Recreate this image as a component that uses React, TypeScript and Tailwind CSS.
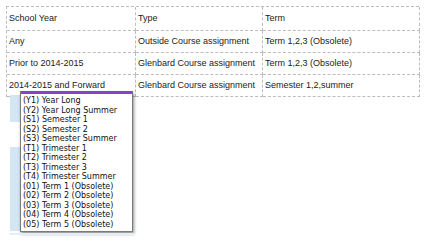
const rows = [
  ["School Year", "Type", "Term"],
  ["Any", "Outside Course assignment", "Term 1,2,3 (Obsolete)"],
  ["Prior to 2014-2015", "Glenbard Course assignment", "Term 1,2,3 (Obsolete)"],
  ["2014-2015 and Forward", "Glenbard Course assignment", "Semester 1,2,summer"],
];

const options = [
  "(Y1) Year Long",
  "(Y2) Year Long Summer",
  "(S1) Semester 1",
  "(S2) Semester 2",
  "(S3) Semester Summer",
  "(T1) Trimester 1",
  "(T2) Trimester 2",
  "(T3) Trimester 3",
  "(T4) Trimester Summer",
  "(01) Term 1 (Obsolete)",
  "(02) Term 2 (Obsolete)",
  "(03) Term 3 (Obsolete)",
  "(04) Term 4 (Obsolete)",
  "(05) Term 5 (Obsolete)",
];

export default function App() {
  return (
    <div className="relative w-[426px] h-[245px] bg-white overflow-hidden" style={{ fontFamily: '"Liberation Sans", Arial, sans-serif' }}>
      <div className="pt-[6px] pl-[6px]">
        <div className="grid grid-cols-[129px_127px_157px] border-t border-l border-dashed border-[#bdbdbd] text-[9px] text-[#222] w-[413px]">
          {rows.map((r, i) =>
            r.map((c, j) => (
              <div
                key={`${i}-${j}`}
                className={`flex items-center whitespace-nowrap px-[2px] border-r border-b border-dashed border-[#bdbdbd] ${i === 0 ? "h-[24px]" : "h-[22px]"}`}
              >
                {c}
              </div>
            ))
          )}
        </div>
      </div>

      {/* open select list, drawn over the table */}
      <div className="absolute left-[10px] top-[91px] flex flex-col">
        <div className="flex">
          <div className="flex flex-col w-[10px] pt-[4px]">
            <div className="h-[27px] bg-[#d3e6f2]" />
            <div className="h-[25px]" />
            <div className="h-[84px] bg-[#d3e6f2]" />
          </div>
          <div
            className="w-[113px] bg-white border border-[#7a7a7a] border-t-0 shadow-[1px_2px_3px_rgba(0,0,0,0.45)]"
            style={{ fontFamily: '"DejaVu Sans", Verdana, sans-serif' }}
          >
            <div className="h-[3px] bg-[#8a3fd0]" />
            <ul className="pt-[2px] pb-[2px] pl-[2px] text-[8px] leading-[9.5px] text-[#111]">
              {options.map((o) => (
                <li key={o} className="whitespace-nowrap">{o}</li>
              ))}
            </ul>
          </div>
        </div>
        <div className="mt-[1px] h-[2px] w-[124px] bg-[#e3eef6]" />
      </div>
    </div>
  );
}
